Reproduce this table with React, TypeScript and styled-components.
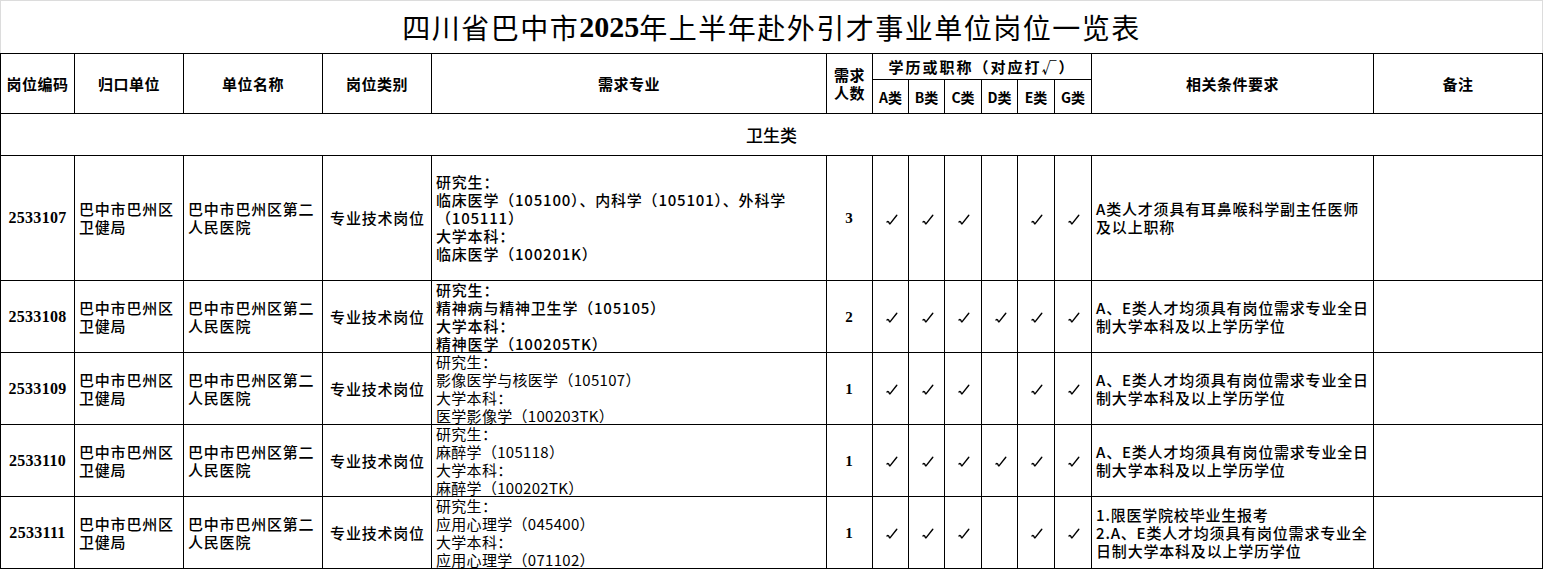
import styled, { createGlobalStyle } from "styled-components";

const GlobalStyle = createGlobalStyle`
  html, body {
    margin: 0;
    padding: 0;
    background: #ffffff;
  }
  body {
    font-family: "Noto Sans CJK SC", "Liberation Sans", sans-serif;
    color: #000;
  }
`;

type Post = {
  code: string;
  count: string;
  majors: string[];
  plainMajors?: boolean;
  checks: boolean[];
  notes: string[];
  tall?: boolean;
};

const posts: Post[] = [
  {
    code: "2533107",
    count: "3",
    majors: [
      "研究生：",
      "临床医学（105100）、内科学（105101）、外科学",
      "（105111）",
      "大学本科：",
      "临床医学（100201K）",
    ],
    checks: [true, true, true, false, true, true],
    notes: ["A类人才须具有耳鼻喉科学副主任医师", "及以上职称"],
    tall: true,
  },
  {
    code: "2533108",
    count: "2",
    majors: ["研究生：", "精神病与精神卫生学（105105）", "大学本科：", "精神医学（100205TK）"],
    checks: [true, true, true, true, true, true],
    notes: ["A、E类人才均须具有岗位需求专业全日", "制大学本科及以上学历学位"],
  },
  {
    code: "2533109",
    count: "1",
    majors: ["研究生：", "影像医学与核医学（105107）", "大学本科：", "医学影像学（100203TK）"],
    plainMajors: true,
    checks: [true, true, true, false, true, true],
    notes: ["A、E类人才均须具有岗位需求专业全日", "制大学本科及以上学历学位"],
  },
  {
    code: "2533110",
    count: "1",
    majors: ["研究生：", "麻醉学（105118）", "大学本科：", "麻醉学（100202TK）"],
    plainMajors: true,
    checks: [true, true, true, true, true, true],
    notes: ["A、E类人才均须具有岗位需求专业全日", "制大学本科及以上学历学位"],
  },
  {
    code: "2533111",
    count: "1",
    majors: ["研究生：", "应用心理学（045400）", "大学本科：", "应用心理学（071102）"],
    plainMajors: true,
    checks: [true, true, true, false, true, true],
    notes: ["1.限医学院校毕业生报考", "2.A、E类人才均须具有岗位需求专业全", "日制大学本科及以上学历学位"],
  },
];

const colWidths = [74, 109, 139, 109, 395, 46, 36, 36, 37, 36, 37, 37, 282, 169];
const grades = ["A类", "B类", "C类", "D类", "E类", "G类"];

const Sheet = styled.div`
  width: 1543px;
`;

const TitleBar = styled.div`
  height: 52px;
  border: 1px solid #dcdcdc;
  border-bottom: none;
  display: flex;
  align-items: center;
  justify-content: center;
  font-size: 28px;
  font-weight: 400;
  letter-spacing: 1.5px;
`;

const Year = styled.span`
  font-family: "Liberation Serif", serif;
  font-weight: 700;
  font-size: 30px;
  letter-spacing: 0;
`;

const Grid = styled.table`
  width: 1543px;
  table-layout: fixed;
  border-collapse: collapse;
  font-size: 15px;
`;

const HeadRow = styled.tr<{ $h: number }>`
  height: ${(p) => p.$h}px;
`;

const Th = styled.th<{ $spaced?: boolean }>`
  border: 1px solid #000;
  padding: 0;
  font-size: 15px;
  font-weight: 700;
  text-align: center;
  vertical-align: middle;
  line-height: 18px;
  letter-spacing: ${(p) => (p.$spaced ? "2px" : "0.5px")};
  white-space: nowrap;
`;

const SubTh = styled(Th)`
  font-size: 14px;
  letter-spacing: 0;
`;

const Category = styled.td`
  border: 1px solid #000;
  text-align: center;
  font-size: 17px;
  font-weight: 500;
  padding: 0;
`;

const Row = styled.tr<{ $tall?: boolean }>`
  height: ${(p) => (p.$tall ? 125 : 72)}px;
`;

const Cell = styled.td<{ $align?: "left" | "center" }>`
  border: 1px solid #000;
  padding: 0 3px 0 4px;
  text-align: ${(p) => p.$align ?? "left"};
  vertical-align: middle;
  font-weight: 500;
  line-height: 18px;
  letter-spacing: 0.8px;
  white-space: nowrap;
`;

const Code = styled(Cell)`
  font-family: "Liberation Serif", serif;
  font-weight: 700;
  font-size: 16px;
  letter-spacing: 0.3px;
  padding: 0;
`;

const Count = styled(Cell)`
  font-family: "Liberation Serif", serif;
  font-weight: 700;
  font-size: 15px;
  padding: 0;
`;

const CheckCell = styled(Cell)`
  padding: 0;
  text-align: center;
`;

/* a 4-line list fills a 72px row, the last line touching the rule as in the sheet */
const LineList = styled.div<{ $free?: boolean }>`
  max-height: ${(p) => (p.$free ? "none" : "71px")};
  overflow: visible;
`;

const Line = styled.div<{ $plain?: boolean }>`
  height: 18px;
  font-weight: ${(p) => (p.$plain ? 400 : 500)};
  letter-spacing: ${(p) => (p.$plain ? "0.3px" : "0.8px")};
`;

const TickMark = styled.svg`
  display: inline-block;
  vertical-align: middle;
  margin-left: 2px;
`;

function Tick() {
  return (
    <TickMark width="12" height="12" viewBox="0 0 12 12">
      <path
        d="M1 8 Q2.2 6.8 3.2 9 Q3.6 10.4 4.2 9.6 L10.8 1.2"
        fill="none"
        stroke="#000"
        strokeWidth="1.4"
        strokeLinejoin="round"
        strokeLinecap="round"
      />
    </TickMark>
  );
}

export default function App() {
  return (
    <>
      <GlobalStyle />
      <Sheet>
        <TitleBar>
          四川省巴中市<Year>2025</Year>年上半年赴外引才事业单位岗位一览表
        </TitleBar>
        <Grid>
          <colgroup>
            {colWidths.map((w, i) => (
              <col key={i} style={{ width: w }} />
            ))}
          </colgroup>
          <thead>
            <HeadRow $h={26}>
              <Th rowSpan={2}>岗位编码</Th>
              <Th rowSpan={2}>归口单位</Th>
              <Th rowSpan={2}>单位名称</Th>
              <Th rowSpan={2}>岗位类别</Th>
              <Th rowSpan={2}>需求专业</Th>
              <Th rowSpan={2}>
                需求
                <br />
                人数
              </Th>
              <Th colSpan={6} $spaced>
                学历或职称（对应打√）
              </Th>
              <Th rowSpan={2}>相关条件要求</Th>
              <Th rowSpan={2}>备注</Th>
            </HeadRow>
            <HeadRow $h={34}>
              {grades.map((g) => (
                <SubTh key={g}>{g}</SubTh>
              ))}
            </HeadRow>
          </thead>
          <tbody>
            <HeadRow $h={42}>
              <Category colSpan={14}>卫生类</Category>
            </HeadRow>
            {posts.map((p) => (
              <Row key={p.code} $tall={p.tall}>
                <Code $align="center">{p.code}</Code>
                <Cell>
                  巴中市巴州区
                  <br />
                  卫健局
                </Cell>
                <Cell>
                  巴中市巴州区第二
                  <br />
                  人民医院
                </Cell>
                <Cell $align="center">专业技术岗位</Cell>
                <Cell>
                  <LineList $free={p.tall}>
                    {p.majors.map((m, i) => (
                      <Line key={i} $plain={p.plainMajors}>
                        {m}
                      </Line>
                    ))}
                  </LineList>
                </Cell>
                <Count $align="center">{p.count}</Count>
                {p.checks.map((c, i) => (
                  <CheckCell key={i}>{c && <Tick />}</CheckCell>
                ))}
                <Cell>
                  {p.notes.map((n, i) => (
                    <Line key={i}>{n}</Line>
                  ))}
                </Cell>
                <Cell />
              </Row>
            ))}
          </tbody>
        </Grid>
      </Sheet>
    </>
  );
}
